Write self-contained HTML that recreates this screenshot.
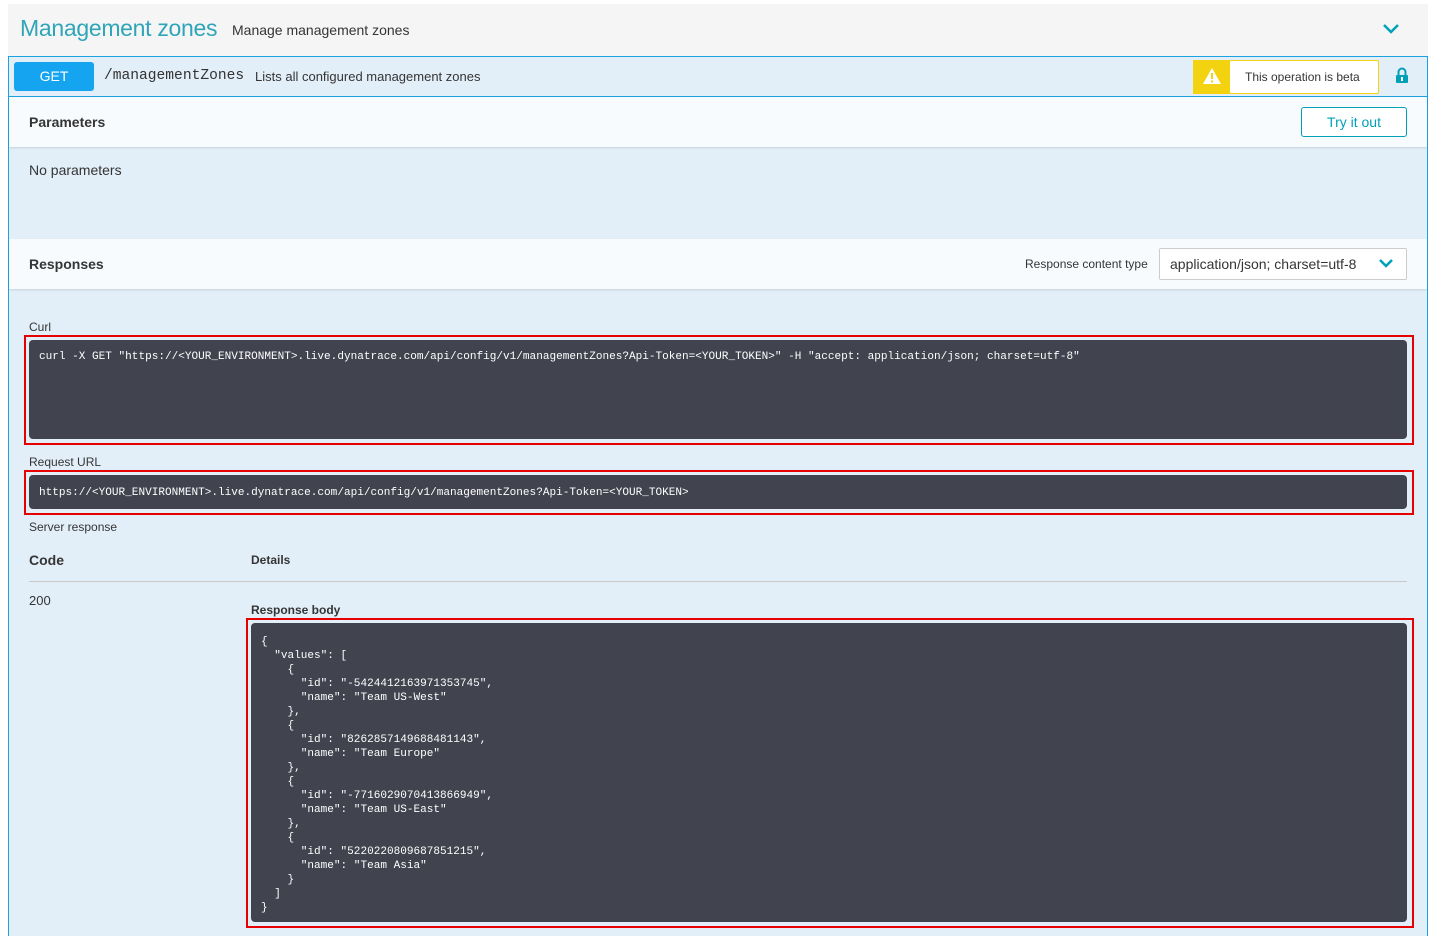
<!DOCTYPE html>
<html><head><meta charset="utf-8"><style>
*{box-sizing:border-box;margin:0;padding:0}
body{width:1435px;height:934px;overflow:hidden;background:#fff;font-family:"Liberation Sans",sans-serif;color:#353535;position:relative}
.abs{position:absolute}
.mono{font-family:"Liberation Mono",monospace}
.code{background:#41434f;color:#fff;border-radius:4px;font-family:"Liberation Mono",monospace;font-size:11.05px;white-space:pre}
.red{border:2px solid #e60000}
</style></head><body>
<div class="abs" style="left:8px;top:4px;width:1420px;height:52px;background:#f5f5f5"></div>
<div class="abs" style="left:20px;top:15px;font-size:23px;color:#2fa5b8;letter-spacing:-0.3px">Management zones</div>
<div class="abs" style="left:232px;top:22px;font-size:14px">Manage management zones</div>
<svg class="abs" style="left:1382px;top:22px" width="18" height="14"><path d="M2 3 L9 10 L16 3" fill="none" stroke="#00a1b8" stroke-width="2.5"/></svg>

<div class="abs" style="left:8px;top:56px;width:1420px;height:880px;background:#e2eef8;border:1px solid #1aa3e0;border-bottom:none"></div>
<div class="abs" style="left:9px;top:96px;width:1418px;height:1px;background:#1aa3e0"></div>
<div class="abs" style="left:14px;top:62px;width:80px;height:29px;background:#15a5f0;border-radius:3px;color:#fff;font-size:14px;text-align:center;line-height:29px">GET</div>
<div class="abs mono" style="left:104px;top:68px;font-size:14.6px;color:#333">/managementZones</div>
<div class="abs" style="left:255px;top:69px;font-size:13px">Lists all configured management zones</div>
<div class="abs" style="left:1193px;top:60px;width:186px;height:34px;border:1px solid #f3d20f;background:#fff;border-radius:2px"></div>
<div class="abs" style="left:1193px;top:60px;width:37px;height:34px;background:#f3d20f"></div>
<svg class="abs" style="left:1202px;top:67px" width="20" height="18"><path d="M10 1 L19 17 L1 17Z" fill="#fff"/><rect x="9" y="6" width="2" height="6" fill="#f3d20f"/><rect x="9" y="13.5" width="2" height="2" fill="#f3d20f"/></svg>
<div class="abs" style="left:1245px;top:70px;font-size:12px">This operation is beta</div>
<svg class="abs" style="left:1395px;top:67px" width="14" height="17"><path d="M3.5 8 V5 a3.5 3.5 0 0 1 7 0 V8" fill="none" stroke="#00a1b8" stroke-width="2"/><rect x="1" y="8" width="12" height="8" rx="1" fill="#00a1b8"/><rect x="6" y="10" width="2" height="4" fill="#fff"/></svg>

<div class="abs" style="left:9px;top:97px;width:1418px;height:50px;background:#f7fbfe;box-shadow:0 1px 2px rgba(0,0,0,.12)"></div>
<div class="abs" style="left:29px;top:114px;font-size:14px;font-weight:bold">Parameters</div>
<div class="abs" style="left:1301px;top:107px;width:106px;height:30px;border:1px solid #00a1b8;border-radius:3px;color:#00a1b8;font-size:14px;text-align:center;line-height:28px;background:#fff">Try it out</div>
<div class="abs" style="left:29px;top:162px;font-size:14px">No parameters</div>

<div class="abs" style="left:9px;top:239px;width:1418px;height:50px;background:#f7fbfe;box-shadow:0 1px 2px rgba(0,0,0,.12)"></div>
<div class="abs" style="left:29px;top:256px;font-size:14px;font-weight:bold">Responses</div>
<div class="abs" style="left:1025px;top:257px;font-size:12px">Response content type</div>
<div class="abs" style="left:1159px;top:248px;width:248px;height:32px;border:1px solid #ccc;border-radius:2px;background:#fff"></div>
<div class="abs" style="left:1170px;top:256px;font-size:14px">application/json; charset=utf-8</div>
<svg class="abs" style="left:1378px;top:258px" width="16" height="12"><path d="M2 2 L8 8 L14 2" fill="none" stroke="#00a1b8" stroke-width="2.5"/></svg>

<div class="abs" style="left:29px;top:320px;font-size:12px">Curl</div>
<div class="abs red" style="left:24px;top:335px;width:1390px;height:110px"></div>
<div class="abs code" style="left:29px;top:340px;width:1378px;height:99px;padding:11px 10px">curl -X GET "https://&lt;YOUR_ENVIRONMENT&gt;.live.dynatrace.com/api/config/v1/managementZones?Api-Token=&lt;YOUR_TOKEN&gt;" -H "accept: application/json; charset=utf-8"</div>
<div class="abs" style="left:29px;top:455px;font-size:12px">Request URL</div>
<div class="abs red" style="left:24px;top:470px;width:1390px;height:45px"></div>
<div class="abs code" style="left:29px;top:475px;width:1378px;height:34px;padding:12px 10px 0">https://&lt;YOUR_ENVIRONMENT&gt;.live.dynatrace.com/api/config/v1/managementZones?Api-Token=&lt;YOUR_TOKEN&gt;</div>
<div class="abs" style="left:29px;top:520px;font-size:12px">Server response</div>
<div class="abs" style="left:29px;top:552px;font-size:14px;font-weight:bold">Code</div>
<div class="abs" style="left:251px;top:553px;font-size:12px;font-weight:bold">Details</div>
<div class="abs" style="left:29px;top:581px;width:1378px;height:1px;background:#c8c8c8"></div>
<div class="abs" style="left:29px;top:593px;font-size:13px">200</div>
<div class="abs" style="left:251px;top:603px;font-size:12px;font-weight:bold">Response body</div>
<div class="abs red" style="left:246px;top:618px;width:1168px;height:310px"></div>
<div class="abs code" style="left:251px;top:623px;width:1156px;height:299px;padding:12px 10px;line-height:14px">{
  "values": [
    {
      "id": "-5424412163971353745",
      "name": "Team US-West"
    },
    {
      "id": "8262857149688481143",
      "name": "Team Europe"
    },
    {
      "id": "-7716029070413866949",
      "name": "Team US-East"
    },
    {
      "id": "5220220809687851215",
      "name": "Team Asia"
    }
  ]
}</div>
</body></html>
